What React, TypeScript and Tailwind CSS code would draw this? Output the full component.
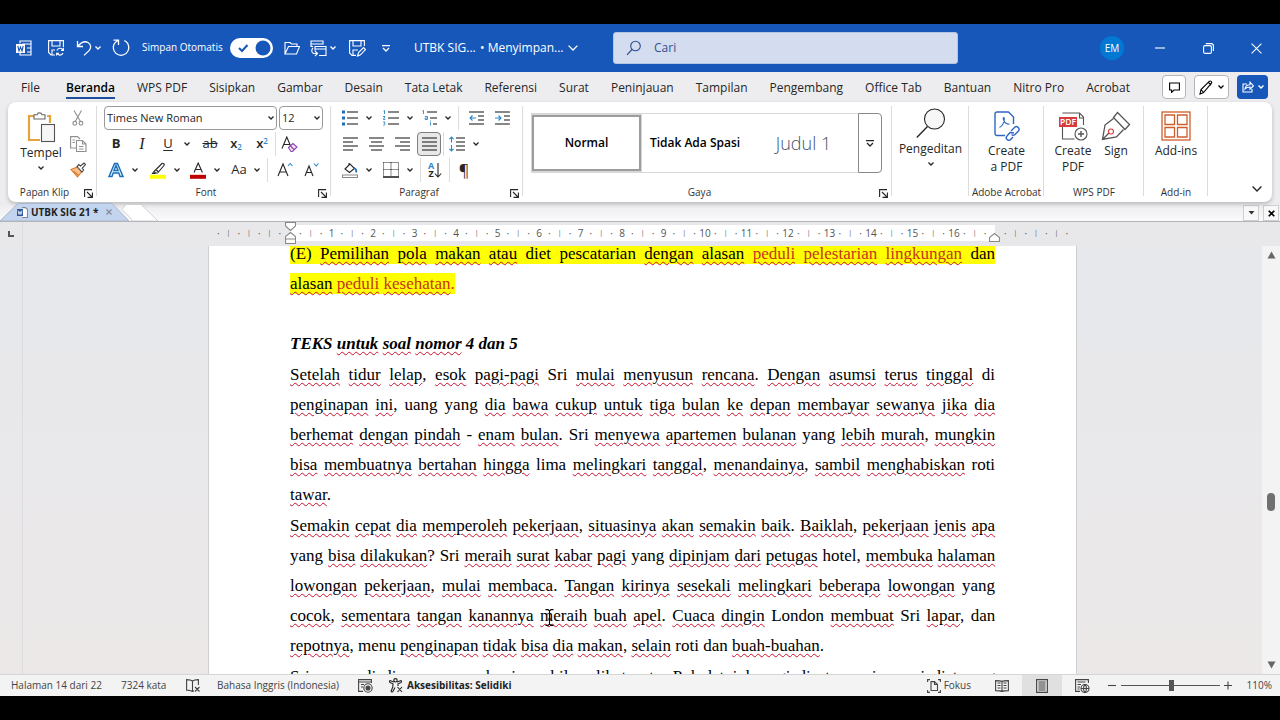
/**
 * Word document window: title bar, ribbon, Office Tab strip, ruler,
 * the page itself and the status bar.
 */
import { useState, type ReactNode } from 'react';
import clsx from 'clsx';

// ── Data ──────────────────────────────────────────────────────────────────

const MENU = [
  'File', 'Beranda', 'WPS PDF', 'Sisipkan', 'Gambar', 'Desain', 'Tata Letak', 'Referensi',
  'Surat', 'Peninjauan', 'Tampilan', 'Pengembang', 'Office Tab', 'Bantuan', 'Nitro Pro', 'Acrobat',
];

// Words the proofing language accepts; everything else gets a squiggle
const KNOWN = new Set([
  '(E)', 'diet', 'pescatarian', 'TEKS', '4', '5', 'dan', 'Sri', 'di', 'uang', 'yang', '-',
  'lima', 'roti', 'hotel', 'London', 'menu',
]);

const PARA_ONE = [
  'Setelah tidur lelap, esok pagi-pagi Sri mulai menyusun rencana. Dengan asumsi terus tinggal di',
  'penginapan ini, uang yang dia bawa cukup untuk tiga bulan ke depan membayar sewanya jika dia',
  'berhemat dengan pindah - enam bulan. Sri menyewa apartemen bulanan yang lebih murah, mungkin',
  'bisa membuatnya bertahan hingga lima melingkari tanggal, menandainya, sambil menghabiskan roti',
  'tawar.',
];

const PARA_TWO = [
  'Semakin cepat dia memperoleh pekerjaan, situasinya akan semakin baik. Baiklah, pekerjaan jenis apa',
  'yang bisa dilakukan? Sri meraih surat kabar pagi yang dipinjam dari petugas hotel, membuka halaman',
  'lowongan pekerjaan, mulai membaca. Tangan kirinya sesekali melingkari beberapa lowongan yang',
  'cocok, sementara tangan kanannya meraih buah apel. Cuaca dingin London membuat Sri lapar, dan',
  'repotnya, menu penginapan tidak bisa dia makan, selain roti dan buah-buahan.',
];

const PARA_THREE = [
  'Sri menyudi dia menyesap kopi sambil melihat peta. Pukul tujuh pagi di atas meja menjadi terang',
];

// ── Small pieces ──────────────────────────────────────────────────────────

function Icon({ w = 18, h, box, children, className }: {
  w?: number; h?: number; box?: string; children: ReactNode; className?: string;
}) {
  return (
    <svg
      width={w}
      height={h ?? w}
      viewBox={box ?? `0 0 ${w} ${h ?? w}`}
      fill="none"
      stroke="currentColor"
      strokeWidth="1.1"
      className={clsx('shrink-0', className)}
      aria-hidden="true"
    >
      {children}
    </svg>
  );
}

const Chevron = () => (
  <Icon w={6} h={4}><path d="M0.5 0.5 3 3 5.5 0.5" strokeWidth="1.3" /></Icon>
);

function Tool({ label, className, children }: { label: string; className?: string; children: ReactNode }) {
  return (
    <button
      type="button"
      aria-label={label}
      className={clsx('flex h-6 shrink-0 items-center justify-center', className ?? 'w-[26px]')}
    >
      {children}
    </button>
  );
}

const More = ({ label }: { label: string }) => (
  <Tool label={label} className="w-3"><Chevron /></Tool>
);

const Sep = () => <span className="block h-6 w-px shrink-0 bg-[#dcdcdc]" />;

const Launcher = ({ label }: { label: string }) => (
  <button type="button" aria-label={label} className="absolute right-1 bottom-1">
    <Icon w={9}><path d="M0.6 8V0.6H8M3 3l5 5M8.4 3.5v4.9H3.5" /></Icon>
  </button>
);

function Group({ label, launcher, className, children }: {
  label: string; launcher?: boolean; className: string; children: ReactNode;
}) {
  return (
    <section
      aria-label={label}
      className={clsx('relative flex shrink-0 flex-col pt-1 after:absolute after:top-1 after:right-0 after:bottom-1.5 after:w-px after:bg-[#dcdcdc]', className)}
    >
      <div className="h-[78px]">{children}</div>
      <div className="text-center text-[10px] leading-4 whitespace-nowrap text-[#333]">{label}</div>
      {launcher && <Launcher label={`Pengaturan ${label}`} />}
    </section>
  );
}

const lines = (rows: [number, number, number][]) =>
  rows.map(([x, y, len]) => <path key={y} d={`M${x} ${y}h${len}`} />);

// ── Title bar ─────────────────────────────────────────────────────────────

function TitleBar() {
  const [autosave, setAutosave] = useState(true);

  return (
    <header className="flex h-12 shrink-0 items-center bg-[#1857ba] text-white">
      <div className="flex w-[613px] shrink-0 items-center text-xs">
        <Icon w={16} className="ml-4">
          <path d="M4 3.5V1h11v14H4v-2.500M6 4h9M11 8h4M11 12h4" />
          <rect x="0" y="4" width="9" height="9" fill="white" stroke="none" />
          <path d="m1.800 6 1.200 5L4.500 7 6 11l1.200-5" stroke="#1857ba" />
        </Icon>
        <button type="button" aria-label="Simpan" className="ml-4">
          <Icon w={16}>
            <path d="M7 15H3L.6 12.500V.6h14.800V7M4 .6V6h8V.6M4 15v-5h3" />
            <path d="M9 10.500a3.300 3.300 0 0 1 6-.5M15.400 7.800V10.400H13M15 13a3.300 3.300 0 0 1-6 .3M8.600 15.600V13.200H11" />
          </Icon>
        </button>
        <button type="button" aria-label="Batalkan" className="ml-3">
          <Icon w={16}>
            <path d="M1.500 1v5.500H7M1.700 6.300C5 2.500 9 .8 12 2.500c3.500 2 3.300 6 .8 8.400L8 15.400" strokeWidth="1.300" />
          </Icon>
        </button>
        <More label="Opsi batalkan" />
        <button type="button" aria-label="Ulangi" className="ml-2">
          <Icon w={18}>
            <path d="M1.500 1.200H6.500V6M6.300 1.500C2.800 3 1 6 1.400 9.500a7.700 7.700 0 0 0 15.300 0c.3-3.500-1.500-6.500-4.400-8" strokeWidth="1.300" />
          </Icon>
        </button>
        <label className="ml-3 flex items-center whitespace-nowrap">
          <span className="w-[88px] text-[10px]">Simpan Otomatis</span>
          <input
            type="checkbox"
            role="switch"
            className="sr-only"
            checked={autosave}
            onChange={e => setAutosave(e.target.checked)}
          />
          <Icon w={43} h={20}>
            <rect width="43" height="20" rx="10" fill="white" stroke="none" />
            <circle cx={autosave ? 33 : 10} cy="10" r="7.500" fill="#1857ba" stroke="none" />
            {autosave && <path d="m9 10 3 3 5.500-6" stroke="#1857ba" strokeWidth="2" />}
          </Icon>
        </label>
        <button type="button" aria-label="Buka" className="ml-[11px]">
          <Icon w={16}><path d="M1 14V2.500h5L7.500 4H13v2.500M1 14 4.500 6.500h11L12.500 14Z" /></Icon>
        </button>
        <button type="button" aria-label="Beralih" className="ml-2.5">
          <Icon w={17}>
            <path d="M3 6.500H1V1h12v3H1M5 10.500V6.500h11V15.500H9M5 9h11M3 8c-2 2-1.500 5 1 5.500h3M5 11l2.500 2.500L5 16" />
          </Icon>
        </button>
        <More label="Jendela lain" />
        <button type="button" aria-label="Simpan sebagai" className="ml-2.5">
          <Icon w={17}>
            <path d="M7 15.400H3L.6 13V.6h14.800V6M4 .6V6h8V.6M4 15v-5h5M8.500 16l1-3.500L14.500 7.500 16.400 9.500 11.500 14.800Z" />
          </Icon>
        </button>
        <button type="button" aria-label="Kustomisasi" className="ml-4">
          <Icon w={8} h={7}><path d="M0 .7h8M1 3l3 3 3-3" strokeWidth="1.300" /></Icon>
        </button>
        <span className="ml-6 w-[66px] whitespace-nowrap">UTBK SIG...</span>
        <button type="button" className="flex items-center gap-1 whitespace-nowrap">
          • Menyimpan...
          <Icon w={10} h={6}><path d="m.6.6 4.400 4.400L9.400.6" strokeWidth="1.300" /></Icon>
        </button>
      </div>

      <label className="flex h-8 w-[345px] items-center rounded-[3px] border border-[#b3c6e6] bg-[#d3ddef] text-[#274a8f]">
        <Icon w={16} className="ml-3">
          <circle cx="9.500" cy="6" r="4.800" />
          <path d="M6 9.500 1 14.800" />
        </Icon>
        <input
          type="search"
          aria-label="Cari"
          placeholder="Cari"
          className="ml-3 min-w-0 flex-1 bg-transparent text-xs outline-none placeholder:text-[#31508f]"
        />
      </label>

      <div className="ml-auto flex items-center">
        <button type="button" className="mr-3 size-6 rounded-full bg-[#0078d4] text-[10px]">EM</button>
        <button type="button" aria-label="Perkecil" className="flex w-12 justify-center">
          <Icon w={10}><path d="M0 5h10" /></Icon>
        </button>
        <button type="button" aria-label="Pulihkan" className="flex w-12 justify-center">
          <Icon w={11}>
            <rect x=".6" y="2.600" width="7.800" height="7.800" rx="1.500" />
            <path d="M2.800.6H8a2.400 2.400 0 0 1 2.400 2.400V8" />
          </Icon>
        </button>
        <button type="button" aria-label="Tutup" className="flex w-12 justify-center">
          <Icon w={11}><path d="m.6.6 9.800 9.800M10.400.6.6 10.400" /></Icon>
        </button>
      </div>
    </header>
  );
}

// ── Ribbon tabs ───────────────────────────────────────────────────────────

function MenuTabs() {
  return (
    <nav className="flex h-[30px] shrink-0 items-center bg-[#ededf0] pr-3 pl-[21px]">
      <div className="flex gap-[22px]">
        {MENU.map(name => (
          <button
            key={name}
            type="button"
            className={clsx(
              'h-6 border-b-2 pt-1 text-xs leading-[18px] whitespace-nowrap first:mr-1',
              name === 'Beranda' ? 'border-[#1d4f9f] font-semibold text-black' : 'border-transparent text-[#262626]',
            )}
          >
            {name}
          </button>
        ))}
      </div>
      <div className="ml-auto flex gap-2">
        <button type="button" aria-label="Komentar" className="flex h-6 w-6 items-center justify-center rounded border border-[#b5b5b5] bg-white">
          <Icon w={11}><path d="M.6 1h9.800v7H5L2.600 10.400V8h-2Z" /></Icon>
        </button>
        <button type="button" aria-label="Mode pengeditan" className="flex h-6 w-[35px] items-center justify-center gap-1 rounded border border-[#b5b5b5] bg-white">
          <Icon w={15}><path d="m1 14 1-4.500L10.500 1.200c1-.8 2.800.8 2 2L4.500 12.500ZM9.500 2.500l2.600 2.600M2 9.500l2.500 3" /></Icon>
          <Chevron />
        </button>
        <button type="button" aria-label="Bagikan" className="flex h-6 w-[31px] items-center justify-center gap-1 rounded bg-[#1857ba] text-white">
          <Icon w={12}><path d="M5 3H1v8h9V8M3 8c.3-3 2-4.300 5-4.300V1.200L11.400 5 8 8.200V6C6 6 4.300 6.500 3 8Z" /></Icon>
          <Chevron />
        </button>
      </div>
    </nav>
  );
}

// ── Ribbon ────────────────────────────────────────────────────────────────

function Picker({ label, value, className }: { label: string; value: string; className: string }) {
  return (
    <label className={clsx('relative h-6', className)}>
      <select
        aria-label={label}
        defaultValue={value}
        className="block h-6 w-full appearance-none rounded border border-[#9a9a9a] bg-white pl-[2px] text-[11px] text-[#262626]"
      >
        <option>{value}</option>
      </select>
      <span className="pointer-events-none absolute top-2.5 right-[3px]"><Chevron /></span>
    </label>
  );
}

function Clipboard() {
  return (
    <div className="flex h-full">
      <button type="button" className="ml-3 flex w-[42px] flex-col items-center self-start pt-1.5 text-xs">
        <Icon w={30} h={32}>
          <path d="M9 4H3v24h11M21 4h3v7" stroke="#e8a33d" strokeWidth="2.200" />
          <path d="M8 2.800h3a2.600 2.600 0 0 1 5 0h3V7H8Z" fill="white" stroke="#666" />
          <rect x="15.500" y="12.500" width="13" height="17" fill="#f6f6f6" stroke="#555" />
        </Icon>
        <span className="leading-[18px]">Tempel</span>
        <span className="mt-1"><Chevron /></span>
      </button>
      <div className="ml-1.5 flex flex-col gap-[2px]">
        <Tool label="Potong" className="w-5">
          <Icon w={12} h={16} className="text-[#8f8f8f]">
            <path d="m2 .5 6.500 11M9.500.5 3.200 11.500" />
            <circle cx="2.800" cy="13.300" r="1.900" /><circle cx="9" cy="13.300" r="1.900" />
          </Icon>
        </Tool>
        <Tool label="Salin" className="w-5">
          <Icon w={17} h={16} className="text-[#8f8f8f]">
            <path d="M6 12H.6V.6h7L10 3M6.500 4.500h6l3.500 3.500v7.500H6.500ZM12.500 4.500V8H16M9 10.500h4.500M9 13h4.500M2.500 4H5M2.500 6.500H5" />
          </Icon>
        </Tool>
        <Tool label="Pewarna format" className="w-5">
          <Icon w={16}>
            <path d="M1 7.500 7.500 5l4 5L7.500 15Z" fill="#f7c08a" stroke="#d9772b" />
            <path d="m7 4.500 5 5.500 1.700-2-1.500-1.700L15.500 2.500 14 1 10.500 4 8.800 2.600Z" fill="white" stroke="#444" />
            <path d="m3.500 9 5 4.500" stroke="#d9772b" />
          </Icon>
        </Tool>
      </div>
    </div>
  );
}

function FontTools() {
  return (
    <div className="flex flex-col gap-[2px] pl-1.5">
      <div className="ml-px flex gap-0.5">
        <Picker label="Font" value="Times New Roman" className="w-[173px]" />
        <Picker label="Ukuran font" value="12" className="w-11" />
      </div>
      <div className="flex items-center text-[13px]">
        <Tool label="Tebal"><b>B</b></Tool>
        <Tool label="Miring"><i className="font-['Liberation_Serif',serif] text-base">I</i></Tool>
        <Tool label="Garis bawah"><span className="underline underline-offset-2">U</span></Tool>
        <More label="Opsi garis bawah" />
        <Tool label="Coret" className="ml-1 w-[26px]"><s>ab</s></Tool>
        <Tool label="Subskrip">
          <span className="font-semibold">x<sub className="text-[8px] text-[#2b88c8]">2</sub></span>
        </Tool>
        <Tool label="Superskrip">
          <span className="font-semibold">x<sup className="text-[8px] text-[#2b88c8]">2</sup></span>
        </Tool>
        <Sep />
        <Tool label="Hapus pemformatan">
          <Icon w={17}>
            <path d="M1 12.500 5.800 1 10 11M2.800 8.500H9" />
            <path d="m7.500 11.500 4.500-4 4 3.500-4.500 4.500H10ZM9.500 10l3.500 3.500" fill="#f3e3f7" stroke="#8e44ad" />
          </Icon>
        </Tool>
      </div>
      <div className="flex items-center text-[13px]">
        <Tool label="Efek teks">
          <Icon w={16}>
            <path d="M1 14.500 6.500 1.500h3L15 14.500h-3L10.800 11H5.200L4 14.500ZM6 8.500h4L8 3.500Z" stroke="#1b6fb8" fill="#d8efff" strokeWidth="1.400" />
          </Icon>
        </Tool>
        <More label="Opsi efek teks" />
        <Tool label="Warna penyorotan" className="ml-1 w-[26px]">
          <Icon w={17}>
            <path d="M5.500 11 4 9.500 12 1.500c1-.8 3 .8 2 2L7.500 11ZM6 7.500 8.500 10M4 9.500 2.500 11.500h3" />
            <path d="M0 14.800h16" stroke="#ffff00" strokeWidth="4" />
          </Icon>
        </Tool>
        <More label="Opsi penyorotan" />
        <Tool label="Warna font" className="ml-0.5 w-[26px]">
          <Icon w={17}>
            <path d="M4 10.500 8.200 1l4.200 9.500M5.500 7.500H11" />
            <path d="M0 14.800h16" stroke="#c00000" strokeWidth="4" />
          </Icon>
        </Tool>
        <More label="Opsi warna font" />
        <Tool label="Ubah huruf besar/kecil" className="ml-1 w-6">Aa</Tool>
        <More label="Opsi huruf" />
        <span className="ml-1"><Sep /></span>
        <Tool label="Perbesar font" className="ml-1 w-[26px]">
          <Icon w={16}><path d="M1 14 6 2l5 12M2.800 10h6.500" /><path d="m11 4 2.200-2.500L15.400 4" stroke="#2b88c8" /></Icon>
        </Tool>
        <Tool label="Perkecil font">
          <Icon w={16}><path d="m2 14 4-10 4 10M3.500 10.500H9" /><path d="m11 1.500 2.200 2.500 2.200-2.500" stroke="#2b88c8" /></Icon>
        </Tool>
      </div>
    </div>
  );
}

function ParagraphTools() {
  return (
    <div className="flex flex-col gap-[2px] pl-1.5">
      <div className="flex items-center">
        <Tool label="Poin">
          <Icon w={16}>
            {lines([[5, 2, 11], [5, 8, 11], [5, 14, 11]])}
            <path d="M0 2h3M0 8h3M0 14h3" stroke="#1f6fb5" strokeWidth="3" />
          </Icon>
        </Tool>
        <More label="Opsi poin" />
        <Tool label="Penomoran" className="ml-[3px] w-[26px]">
          <Icon w={16}>
            {lines([[5, 2, 11], [5, 8, 11], [5, 14, 11]])}
            <path d="M.5 1 1.500.4V4M0 6.500h2L.3 9.500h2M.2 12h1.800l-.8 1.500c1.200 0 1.200 2-1 1.700" stroke="#2b88c8" strokeWidth=".9" />
          </Icon>
        </Tool>
        <More label="Opsi penomoran" />
        <Tool label="Daftar multitingkat" className="ml-0.5 w-6">
          <Icon w={16}>
            {lines([[5, 2, 10], [8, 8, 7], [11, 14, 4]])}
            <path d="M.5 1 1.500.4V4M3 6.500h2.500V9.500H3.200V8h2M8.500 12.500V15.500M8.500 10.500v1" stroke="#2b88c8" strokeWidth=".9" />
          </Icon>
        </Tool>
        <More label="Opsi daftar" />
        <span className="mx-1"><Sep /></span>
        <Tool label="Kurangi inden">
          <Icon w={15} h={14}>
            {lines([[0, 1, 15], [9, 5, 6], [9, 9, 6], [0, 13, 15]])}
            <path d="M7 7H1m2.500-2.500L1 7l2.500 2.500" stroke="#2b88c8" />
          </Icon>
        </Tool>
        <Tool label="Tambah inden">
          <Icon w={15} h={14}>
            {lines([[0, 1, 15], [9, 5, 6], [9, 9, 6], [0, 13, 15]])}
            <path d="M0 7h6M3.500 4.500 6 7 3.500 9.500" stroke="#2b88c8" />
          </Icon>
        </Tool>
      </div>
      <div className="flex items-center">
        <Tool label="Rata kiri"><Icon w={15}>{lines([[0, 1, 15], [0, 5, 10], [0, 9, 15], [0, 13, 10]])}</Icon></Tool>
        <Tool label="Tengah"><Icon w={15}>{lines([[0, 1, 15], [2, 5, 11], [0, 9, 15], [2, 13, 11]])}</Icon></Tool>
        <Tool label="Rata kanan"><Icon w={15}>{lines([[0, 1, 15], [5, 5, 10], [0, 9, 15], [5, 13, 10]])}</Icon></Tool>
        <Tool label="Rata kiri-kanan" className="ml-0.5 w-6 rounded border border-[#7d7d7d] bg-[#e8e8e8]">
          <Icon w={15}>{lines([[0, 1, 15], [0, 5, 15], [0, 9, 15], [0, 13, 15]])}</Icon>
        </Tool>
        <span className="ml-0.5"><Sep /></span>
        <Tool label="Spasi baris">
          <Icon w={16}>
            {lines([[7, 2, 9], [7, 6, 9], [7, 10, 9], [7, 14, 9]])}
            <path d="M2.500 1v5.500M.4 3.200 2.500 1l2.100 2.200M2.500 9v6M.4 12.800 2.500 15l2.100-2.200" stroke="#2b88c8" />
          </Icon>
        </Tool>
        <More label="Opsi spasi" />
      </div>
      <div className="flex items-center">
        <Tool label="Bayangan">
          <Icon w={16}>
            <path d="M3 7 8 2l4.500 4.500-5 4ZM7 1v3" />
            <path d="M12 6c2 .5 2.500 2 2.300 4.500" stroke="#1f6fb5" strokeWidth="1.800" />
            <path d="M.5 13h15v2.500H.5Z" stroke="#888" />
          </Icon>
        </Tool>
        <More label="Opsi bayangan" />
        <Tool label="Batas" className="ml-[3px] w-[26px]">
          <Icon w={16}>
            <path d="M.5.5h15v14M.5.5v14M8 .5v14M.5 7.500h15" strokeDasharray="1 1" />
            <path d="M0 15h16" strokeWidth="1.600" />
          </Icon>
        </Tool>
        <More label="Opsi batas" />
        <span className="ml-1"><Sep /></span>
        <Tool label="Urutkan" className="w-7">
          <span className="flex flex-col text-[9px] leading-2 font-bold"><span className="text-[#2b88c8]">A</span><span>Z</span></span>
          <Icon w={8} h={16}><path d="M4 1v14M.8 11.500 4 15l3.200-3.500" /></Icon>
        </Tool>
        <Sep />
        <Tool label="Tampilkan semua" className="w-7"><span className="text-base leading-none">¶</span></Tool>
      </div>
    </div>
  );
}

function StyleGallery() {
  return (
    <div className="flex pt-[7px] pl-2">
      <div className="flex h-[60px] flex-1 items-center border-y border-l border-[#d8d8d8]">
        <button type="button" className="h-14 w-[109px] border-2 border-[#9c9c9c] text-xs font-semibold text-black outline outline-[#d8d8d8]">Normal</button>
        <button type="button" className="w-[108px] text-xs font-semibold whitespace-nowrap text-black">Tidak Ada Spasi</button>
        <button type="button" className="flex-1 text-lg font-light text-[#44546a]">Judul 1</button>
      </div>
      <button type="button" aria-label="Gaya lainnya" className="mr-[10px] flex w-6 items-center justify-center rounded-r border border-[#8a8a8a]">
        <Icon w={8} h={7}><path d="M0 .7h8M1 3l3 3 3-3" strokeWidth="1.300" /></Icon>
      </button>
    </div>
  );
}

function BigButton({ icon, children, className }: { icon: ReactNode; children: ReactNode; className?: string }) {
  return (
    <button type="button" className={clsx('flex flex-col items-center pt-1 text-xs', className)}>
      <span className="flex h-[32px] items-center">{icon}</span>
      <span className="mt-px leading-4">{children}</span>
    </button>
  );
}

function Ribbon() {
  return (
    <div className="relative z-10 shrink-0 bg-[#ededf0] px-2 text-[#262626]">
      <div className="flex h-[100px] rounded-lg bg-white shadow-[0_2px_4px_rgba(0,0,0,0.22)]">
        <Group label="Papan Klip" launcher className="w-[89px] [&>div:nth-child(2)]:pr-4"><Clipboard /></Group>
        <Group label="Font" launcher className="w-[234px] [&>div:nth-child(2)]:pr-4"><FontTools /></Group>
        <Group label="Paragraf" launcher className="w-48 [&>div:nth-child(2)]:pr-4"><ParagraphTools /></Group>
        <Group label="Gaya" launcher className="w-[369px] [&>div:nth-child(2)]:pr-4"><StyleGallery /></Group>
        <section aria-label="Pengeditan" className="relative w-[77px] shrink-0 after:absolute after:top-1 after:right-0 after:bottom-1.5 after:w-px after:bg-[#dcdcdc]">
          <button type="button" className="flex w-full flex-col items-center pt-1.5 text-xs">
            <Icon w={30}>
              <circle cx="18.500" cy="11" r="10" fill="#f7f7f7" />
              <path d="M11.500 18.500.8 29.500" strokeWidth="1.400" />
            </Icon>
            <span className="mt-0.5 leading-[18px]">Pengeditan</span>
            <span className="mt-1"><Chevron /></span>
          </button>
        </section>
        <Group label="Adobe Acrobat" className="w-[75px]">
          <BigButton
            className="w-full"
            icon={
              <Icon w={26} h={30} className="text-[#2f66c4]">
                <path d="M11 24.500H3a2 2 0 0 1-2-2V3a2 2 0 0 1 2-2h11.500L19.500 6v7" strokeWidth="1.400" />
                <path d="M5.500 16.500c3-1.500 5-5.500 4.800-9 0-1.500-1.500-1.200-1 .5.800 3 3 5.300 6.200 5.300" />
                <path d="m17 20 3.500-3.500a2.500 2.500 0 0 1 3.700 3.700L21 23.500c-1 1-2.500 1-3.500 0M20 22l-4-.5-3 3.500a2.500 2.500 0 0 0 3.700 3.500L19 26" strokeWidth="1.400" />
              </Icon>
            }
          >
            Create<br />a PDF
          </BigButton>
        </Group>
        <Group label="WPS PDF" className="w-[100px]">
          <div className="flex items-start pl-1">
            <BigButton
              className="w-[50px]"
              icon={
                <Icon w={30} className="text-[#555]">
                  <path d="M4.500 2h17l4 4v8M25.500 7h-4V2M4.500 16v12h12" />
                  <rect x="1" y="6" width="18" height="10" fill="#d93b3b" stroke="none" />
                  <text x="2" y="14" fontSize="8.500" fontWeight="600" fill="white" stroke="none">PDF</text>
                  <circle cx="23" cy="23" r="6" />
                  <path d="M23 20v6M20 23h6" strokeWidth="1.400" />
                </Icon>
              }
            >
              Create<br />PDF
            </BigButton>
            <BigButton
              className="w-9"
              icon={
                <Icon w={30} className="text-[#555]">
                  <path d="m16.500 1.500 12 12-4.500 5-11.500-12ZM12.500 7.500 4 14 1.500 28.500 15.500 26l7-7.500M1.500 28.500 8 22" strokeWidth="1.300" />
                  <circle cx="10" cy="20.500" r="2.500" stroke="#d93b3b" />
                </Icon>
              }
            >
              Sign
            </BigButton>
          </div>
        </Group>
        <Group label="Add-in" className="w-16">
          <BigButton
            className="w-full"
            icon={
              <Icon w={30} className="text-[#cf5f2a]">
                <rect x="1" y="1" width="28" height="28" strokeWidth="1.300" />
                <path d="M4 4h9.500v9.500H4ZM16.500 4H26v9.500H16.500ZM4 16.500h9.500V26H4ZM16.500 16.500H26V26H16.500Z" strokeWidth="1.300" />
              </Icon>
            }
          >
            Add-ins
          </BigButton>
        </Group>
        <button type="button" aria-label="Ciutkan pita" className="mt-auto mr-[10px] mb-2.5 ml-auto">
          <Icon w={10} h={6}><path d="m.6.6 4.400 4.400L9.400.6" strokeWidth="1.400" /></Icon>
        </button>
      </div>
    </div>
  );
}

// ── Office Tab strip and ruler ────────────────────────────────────────────

function DocTabs() {
  return (
    <div className="flex h-5 shrink-0 items-end border-b border-[#b4b4b8] bg-linear-to-b from-[#ebebee] to-[#fafafb] pr-px">
      <div className="relative z-20 flex h-[18px] w-[129px] items-center">
        <svg className="absolute inset-0 size-full" viewBox="0 0 129 18" preserveAspectRatio="none" aria-hidden="true">
          <path d="M0 18 17 1.500Q18 .5 20 .5H112L129 18Z" fill="#c3d5ee" stroke="#a9b8cf" />
        </svg>
        <Icon w={11} className="relative ml-[17px] text-[#7f8793]">
          <path d="M5 .6h3.500l2 2v8H5" fill="white" />
          <rect y="2" width="6" height="7" fill="#2b579a" stroke="none" />
          <path d="m1 3.500 1 4 1-3 1 3 1-4" stroke="white" strokeWidth=".8" />
        </Icon>
        <button type="button" className="relative ml-[3px] text-[10px] font-bold whitespace-nowrap text-[#222]">UTBK SIG 21 *</button>
        <button type="button" aria-label="Tutup tab" className="relative ml-2 text-[#7f8793]">
          <Icon w={6}><path d="m.5.5 5 5M5.500.5l-5 5" /></Icon>
        </button>
      </div>
      <button type="button" aria-label="Tab baru" className="relative z-20 -ml-2">
        <Icon w={38} h={17}><path d="M9.500 14 1 5.500 5 .5H20L37 17H11Z" fill="white" stroke="#c9c9cc" strokeWidth=".8" /></Icon>
      </button>
      <div className="ml-auto flex gap-1">
        <button type="button" aria-label="Daftar tab" className="flex h-4 w-4 items-center justify-center border border-[#cfcfd3] bg-[#f8f8f9]">
          <Icon w={7} h={4}><path d="M.5 0h6L3.500 3.500Z" fill="#333" stroke="none" /></Icon>
        </button>
        <button type="button" aria-label="Tutup dokumen" className="flex h-4 w-4 items-center justify-center border border-[#cfcfd3] bg-[#f8f8f9]">
          <Icon w={7}><path d="m.7.7 5.600 5.600M6.300.7.7 6.300" strokeWidth="1.600" /></Icon>
        </button>
      </div>
    </div>
  );
}

const MARGIN_MARKS = ['·', '|', '·', '|', '·', '|', '·'];
const BODY_MARKS = Array.from({ length: 67 }, (_, i) => {
  const n = i + 1;
  if (n % 4 === 0) return String(n / 4);
  return n % 2 === 0 ? '|' : '·';
});

const Marks = ({ marks }: { marks: string[] }) => (
  <>
    {marks.map((m, i) => (
      <span key={i} className="flex w-0 flex-1 justify-end">
        <span className={clsx('translate-x-1/2', m === '|' && 'text-[7px]')}>{m}</span>
      </span>
    ))}
    <span className="w-0 flex-1" />
  </>
);

function Ruler() {
  return (
    <div className="flex h-6 shrink-0 bg-[#e8e8eb] text-[10px] text-[#555]">
      <div className="flex w-[23px] items-center justify-center border-r border-[#dcdce0]">
        <Icon w={6}><path d="M1 0v5h5" strokeWidth="2" /></Icon>
      </div>
      <div className="flex flex-1 justify-center">
        <div className="flex w-[869px] items-start pt-[3px]">
          <div className="flex h-4 w-[82px] items-center"><Marks marks={MARGIN_MARKS} /></div>
          <div className="relative flex h-4 flex-1 items-center bg-white">
            <Marks marks={BODY_MARKS} />
            <Icon w={11} h={22} className="absolute -top-[3px] -left-[5px] text-[#888]">
              <path d="M.5.5h10V4L5.500 8.500.5 4ZM.5 21.500V14.500L5.500 10.500l5 4v7ZM.5 17h10" fill="white" />
            </Icon>
            <Icon w={11} h={9} className="absolute -right-[5px] top-[8px] text-[#888]">
              <path d="M.5 8.500V4.500L5.500.5l5 4v4Z" fill="white" />
            </Icon>
          </div>
          <div className="flex h-4 w-[82px] items-center"><Marks marks={MARGIN_MARKS} /></div>
        </div>
      </div>
      <div className="w-[18px]" />
    </div>
  );
}

// ── Document ──────────────────────────────────────────────────────────────

function Words({ text }: { text: string }) {
  return (
    <>
      {text.split(' ').map((word, i) => {
        const core = word.replace(/[.,?]+$/, '');
        const flagged = !KNOWN.has(core);
        return (
          <span key={i}>
            {i > 0 && ' '}
            {flagged
              ? <span className="underline decoration-[#c8102e] decoration-wavy decoration-1 underline-offset-2">{core}</span>
              : core}
            {word.slice(core.length)}
          </span>
        );
      })}
    </>
  );
}

function Paragraph({ rows, open }: { rows: string[]; open?: boolean }) {
  return (
    <p className="mt-px">
      {rows.map((row, i) => (
        <span
          key={row}
          className={clsx('block whitespace-nowrap', (open || i < rows.length - 1) && '[text-align-last:justify]')}
        >
          <Words text={row} />
        </span>
      ))}
    </p>
  );
}

function Document() {
  return (
    <main className="flex min-h-0 flex-1 bg-linear-to-b from-[#e6e8ec] to-[#ece8e8]">
      <div className="w-[23px] shrink-0 border-r border-[#dcdce0]" />
      <div className="flex flex-1 justify-center overflow-hidden">
        <article className="relative w-[869px] overflow-hidden border-x border-[#cfcfd3] bg-white px-[81px] font-['Liberation_Serif','Times_New_Roman',serif] text-[17px] leading-[30px] text-black">
          <div className="-mt-[7px] flex flex-col">
            <p>
              <span className="block whitespace-nowrap [text-align-last:justify]">
                <mark className="bg-[#ffff00] py-px text-black">
                  <Words text="(E) Pemilihan pola makan atau diet pescatarian dengan alasan" />{' '}
                  <span className="text-[#c4361b]"><Words text="peduli pelestarian lingkungan" /></span> dan
                </mark>
              </span>
              <mark className="bg-[#ffff00] py-px text-black">
                <Words text="alasan" /> <span className="text-[#c4361b]"><Words text="peduli kesehatan." /></span>
              </mark>
            </p>
            <p>&nbsp;</p>
            <h1 className="font-bold italic"><Words text="TEKS untuk soal nomor 4 dan 5" /></h1>
            <Paragraph rows={PARA_ONE} />
            <Paragraph rows={PARA_TWO} />
            <Paragraph rows={PARA_THREE} open />
          </div>
          {/* Text cursor */}
          <Icon w={9} h={17} className="absolute top-[363px] left-[336px] text-black">
            <path d="M.5.6h2.500L4.500 2 6 .6h2.500M4.500 2v13M.5 16.400h2.500L4.500 15 6 16.400h2.500M3 10h3" />
          </Icon>
        </article>
      </div>
      <div className="flex w-[18px] shrink-0 flex-col items-center bg-[#f3f3f3] py-[5px] text-[#666]">
        <Icon w={9} h={8}><path d="M4.500.5 8.500 7.500H.5Z" fill="currentColor" stroke="none" /></Icon>
        <span className="flex-[59]" />
        <span className="h-[18px] w-2 rounded-full bg-[#707070]" />
        <span className="flex-[38]" />
        <Icon w={9} h={8}><path d="M.5.5h8L4.500 7.500Z" fill="currentColor" stroke="none" /></Icon>
      </div>
    </main>
  );
}

// ── Status bar ────────────────────────────────────────────────────────────

function StatusBar() {
  const [zoom, setZoom] = useState(110);

  return (
    <footer className="flex h-[22px] shrink-0 items-center border-t border-[#d6d6d6] bg-[#f3f3f3] pr-2 pl-[11px] text-[10px] whitespace-nowrap text-[#444]">
      <span className="w-[110px]">Halaman 14 dari 22</span>
      <span className="w-[65px]">7324 kata</span>
      <button type="button" aria-label="Pemeriksaan ejaan" className="w-[31px]">
        <Icon w={14} h={13}>
          <path d="M6.500 2C5 .8 3 .6.6.6v10.500c2.400 0 4.400.2 5.900 1.400ZM6.500 2C8 .8 10 .6 12.400.6V6M6.500 12.500l1.500-.8M9 8l4.500 4.500M13.500 8 9 12.500" />
        </Icon>
      </button>
      <span className="w-[141px]">Bahasa Inggris (Indonesia)</span>
      <button type="button" aria-label="Perekaman makro" className="w-[31px]">
        <Icon w={15} h={14}>
          <path d="M5 12.400H.6V.6h12.800V4M.6 3h12.800M3 5.500h3M3 8h2" />
          <circle cx="10" cy="9" r="4.200" /><circle cx="10" cy="9" r="2" fill="currentColor" />
        </Icon>
      </button>
      <button type="button" className="flex items-center gap-1 font-bold text-[#222]">
        <Icon w={14} h={15}>
          <circle cx="6.500" cy="2.300" r="1.700" />
          <path d="M5 4 1.500 2.700C.3 2.500.2 4 1 4.400L4 5.800 3.800 9 2.200 13c-.1 1.200 1.300 1.300 1.700.4L6 9.500M8 4l3.500-1.300c1.200-.2 1.300 1.300.5 1.700L9 5.800V8M8.500 9l4.500 5M13 9l-4.500 5" />
        </Icon>
        Aksesibilitas: Selidiki
      </button>

      <div className="ml-auto flex h-full items-center">
        <button type="button" className="mr-[11px] flex items-center gap-[3px]">
          <Icon w={14}>
            <path d="M.6 3V.6H3M11 .6h2.400V3M13.400 11v2.400H11M3 13.400H.6V11M4 2.600h3.500L10.500 5.500v6H4ZM7.500 2.600V5.500h3" />
          </Icon>
          Fokus
        </button>
        <button type="button" aria-label="Mode baca" className="flex h-full w-10 items-center justify-center">
          <Icon w={14} h={12}>
            <path d="M7 1.500C5.500.6 3 .6.6.6v10c2.400 0 4.900 0 6.400 1 1.500-1 4-1 6.400-1V.6C11 .6 8.500.6 7 1.500ZM7 1.500v10M2.500 3h3M2.500 5.500h3M2.500 8h3M8.500 3h3M8.500 5.500h3M8.500 8h3" />
          </Icon>
        </button>
        <button type="button" aria-label="Tata letak cetak" className="flex h-full w-10 items-center justify-center bg-[#e0e0e0]">
          <Icon w={12} h={14}><path d="M.6.6h10.800v12.800H.6ZM2.500 3h7M2.500 5h7M2.500 7h7M2.500 9h7M2.500 11h7" /></Icon>
        </button>
        <button type="button" aria-label="Tata letak web" className="flex h-full w-10 items-center justify-center">
          <Icon w={15} h={14}>
            <path d="M5 12.400H.6V.6h12.800V4M2.500 3h8M2.500 5.500H6M2.500 8H5M2.500 10h2" />
            <circle cx="10" cy="9.500" r="4" fill="#f3f3f3" /><path d="M6 9.500h8M10 5.500c-2 2-2 6 0 8 2-2 2-6 0-8" />
          </Icon>
        </button>
        <button type="button" aria-label="Perkecil tampilan" className="ml-1.5" onClick={() => setZoom(z => z - 10)}>
          <Icon w={9}><path d="M0 4.500h8" /></Icon>
        </button>
        <input
          type="range"
          aria-label="Zoom"
          min={10}
          max={206}
          value={zoom}
          onChange={e => setZoom(Number(e.target.value))}
          className="mx-1 h-4 w-[99px] appearance-none bg-transparent [&::-webkit-slider-runnable-track]:h-px [&::-webkit-slider-runnable-track]:bg-[#555] [&::-webkit-slider-thumb]:-mt-[5px] [&::-webkit-slider-thumb]:h-[11px] [&::-webkit-slider-thumb]:w-[5px] [&::-webkit-slider-thumb]:appearance-none [&::-webkit-slider-thumb]:bg-[#555]"
        />
        <button type="button" aria-label="Perbesar tampilan" onClick={() => setZoom(z => z + 10)}>
          <Icon w={9}><path d="M0 4.500h8M4 .5v8" /></Icon>
        </button>
        <span className="ml-3 w-[27px] text-right">{zoom}%</span>
      </div>
    </footer>
  );
}

export default function App() {
  return (
    <div className="flex h-screen flex-col overflow-hidden bg-black py-6 font-['Open_Sans','Segoe_UI',sans-serif]">
      <TitleBar />
      <MenuTabs />
      <Ribbon />
      <DocTabs />
      <Ruler />
      <Document />
      <StatusBar />
    </div>
  );
}
